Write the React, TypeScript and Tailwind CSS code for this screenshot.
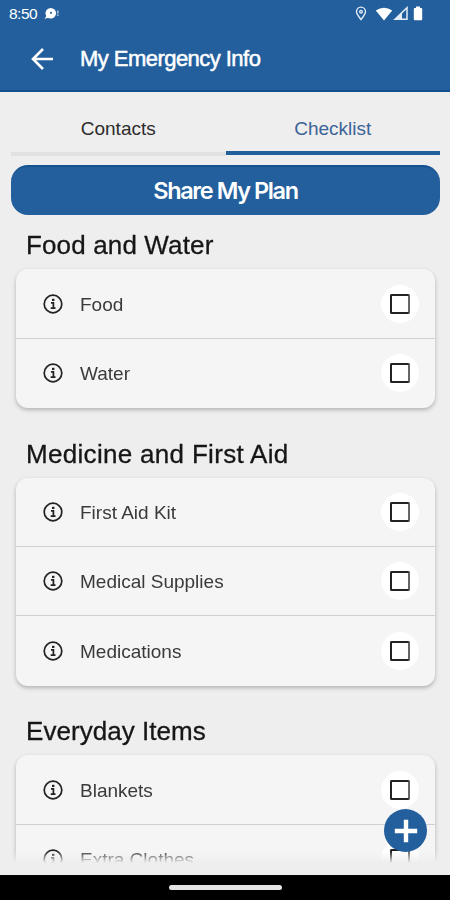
import React, { useState } from 'react';

const sections = [
  { title: 'Food and Water', items: ['Food', 'Water'], spacing: 'tracking-[0.14px]' },
  {
    title: 'Medicine and First Aid',
    items: ['First Aid Kit', 'Medical Supplies', 'Medications'],
    spacing: 'tracking-[0.31px]',
  },
  { title: 'Everyday Items', items: ['Blankets', 'Extra Clothes'], spacing: 'tracking-[0.05px]' },
];

function StatusBar() {
  return (
    <div className="flex h-[27px] items-center justify-between pl-[9px] pr-[27px] text-white">
      <div className="flex items-center gap-[7px]">
        <span className="text-[15.5px] leading-none tracking-[-0.5px]">8:50</span>
        <svg width="16" height="14" viewBox="0 0 16 14">
          <circle cx="6.8" cy="6.2" r="5.3" fill="white" />
          <path d="M3 8L.5 12l4-1.5z" fill="white" />
          <circle cx="7" cy="5.8" r="1.1" fill="#235f9c" />
          <path d="M13.8 3.5v5.5" stroke="white" strokeOpacity=".6" strokeWidth="1.6" strokeDasharray="3 1" />
        </svg>
      </div>
      <div className="flex items-center">
        <svg width="12" height="15" viewBox="0 0 12 15" fill="none" stroke="#e3ecf5" strokeWidth="1.4">
          <path d="M6 13.5C3.5 10.3 1.5 8.2 1.5 5.6a4.5 4.5 0 0 1 9 0C10.5 8.2 8.5 10.3 6 13.5z" />
          <circle cx="6" cy="5.7" r="1.3" />
        </svg>
        <svg className="ml-2" width="18" height="14" viewBox="0 0 18 14">
          <path d="M.8 3.6Q9-2 17.2 3.6L9 13.4z" fill="white" />
        </svg>
        <svg width="16" height="15" viewBox="0 0 16 15">
          <path d="M2 13.3L14 1.7v11.6z" fill="none" stroke="#e3ecf5" strokeWidth="1.5" />
          <path d="M1 14L9 6.5V14z" fill="#e3ecf5" />
        </svg>
        <svg className="ml-[4px]" width="10" height="15" viewBox="0 0 10 15">
          <path d="M3 .5h4V2h1.2q1 0 1 1v10.3q0 1-1 1H1.8q-1 0-1-1V3q0-1 1-1H3z" fill="white" />
        </svg>
      </div>
    </div>
  );
}

function Header() {
  return (
    <header className="h-[92px] shrink-0 border-b-2 border-[#0f4f8e] bg-[#235f9c]">
      <StatusBar />
      <div className="flex h-[64px] items-center pl-[30px] text-white">
        <button type="button" aria-label="Back">
          <svg width="24" height="24" viewBox="0 0 24 24" fill="none" stroke="white" strokeWidth="2.6">
            <path d="M23 12H3M13 2L3 12l10 10" />
          </svg>
        </button>
        <h1 className="ml-[26px] text-[22px] leading-none tracking-[-0.54px] [-webkit-text-stroke:0.5px_white]">
          My Emergency Info
        </h1>
      </div>
    </header>
  );
}

function Tabs({ active, onSelect } : { active: string; onSelect: (tab: string) => void }) {
  return (
    <div className="ml-[11px] mr-[10px] flex h-[64px] shrink-0">
      {['Contacts', 'Checklist'].map((tab) => (
        <button
          key={tab}
          type="button"
          onClick={() => onSelect(tab)}
          className={active === tab
            ? 'mb-[1px] flex-1 border-b-4 border-[#235f9c] pt-[15px] text-[19px] text-[#3c6496]'
            : 'flex-1 border-b-4 border-[#e1e1e1] pt-[14px] text-[19px] text-[#2c2c2c]'}
        >
          {tab}
        </button>
      ))}
    </div>
  );
}

function InfoIcon() {
  return (
    <svg width="20" height="20" viewBox="0 0 20 20" fill="none" stroke="#222" strokeWidth="1.7">
      <circle cx="10" cy="10" r="8.8" />
      <path d="M8 8.8h2.4v5M7.7 14.2h4.8" />
      <path d="M9 5.9h2.4" strokeWidth="2.2" />
    </svg>
  );
}

function ChecklistRow({ label } : { label: string }) {
  const [checked, setChecked] = useState(false);

  return (
    <li className="flex h-[69.3px] items-center border-b border-[#d0d0d0] pl-[27px] pr-[16px] last:border-b-0">
      <InfoIcon />
      <span className="ml-[17px] flex-1 pt-[1px] text-[19px] leading-none text-[#3a3a3a]">{label}</span>
      <button
        type="button"
        role="checkbox"
        aria-checked={checked}
        aria-label={label}
        onClick={() => setChecked(!checked)}
        className="flex size-[38px] items-center justify-center rounded-full bg-white"
      >
        <span
          className={checked
            ? 'size-[20px] rounded-[2px] border-2 border-[#222] bg-[#235f9c]'
            : 'size-[20px] rounded-[2px] border-2 border-[#222] border-r-[#666]'}
        />
      </button>
    </li>
  );
}

function ChecklistSection({ title, items, spacing } : { title: string; items: string[]; spacing: string }) {
  return (
    <section className="mb-[30.8px]">
      <h2 className={`ml-[26px] h-[39px] text-[26px] leading-[30px] text-[#161616] [-webkit-text-stroke:0.3px_#161616] ${spacing}`}>
        {title}
      </h2>
      <ul className="ml-[16px] mr-[15px] rounded-[12px] bg-[#f5f5f5] shadow-[0_2px_4px_rgba(0,0,0,0.25)]">
        {items.map((item) => <ChecklistRow key={item} label={item} />)}
      </ul>
    </section>
  );
}

export default function App() {
  const [tab, setTab] = useState('Checklist');

  return (
    <div className="relative flex h-[900px] w-[450px] flex-col overflow-hidden bg-[#eeeeee] font-['Liberation_Sans',Arial,sans-serif]">
      <Header />
      <Tabs active={tab} onSelect={setTab} />
      <button
        type="button"
        className="ml-[11px] mr-[10px] mt-[9px] h-[50px] shrink-0 rounded-[17px] border-t-2 border-[#155291] bg-[#235f9c] font-[Inter,sans-serif] text-[23.5px] font-semibold leading-none tracking-[-1.4px] text-white"
      >
        Share My Plan
      </button>
      <main className="min-h-0 flex-1 overflow-hidden pt-[15.4px] [mask-image:linear-gradient(to_bottom,black_calc(100%-12px),transparent)]">
        {sections.map((section) => (
          <ChecklistSection
            key={section.title}
            title={section.title}
            items={section.items}
            spacing={section.spacing}
          />
        ))}
      </main>
      <div className="h-[12px] shrink-0" />
      <div className="flex h-[25px] shrink-0 items-center justify-center bg-black">
        <div className="h-[5px] w-[113px] rounded-full bg-[#e4e4e4]" />
      </div>
      {/* floating add button */}
      <button
        type="button"
        aria-label="Add item"
        className="absolute bottom-[48px] right-[23px] flex size-[43px] items-center justify-center rounded-full bg-[#235f9c]"
      >
        <svg width="24" height="24" viewBox="0 0 24 24" stroke="white" strokeWidth="4.4">
          <path d="M12 .8v22.4M.8 12h22.4" />
        </svg>
      </button>
    </div>
  );
}
